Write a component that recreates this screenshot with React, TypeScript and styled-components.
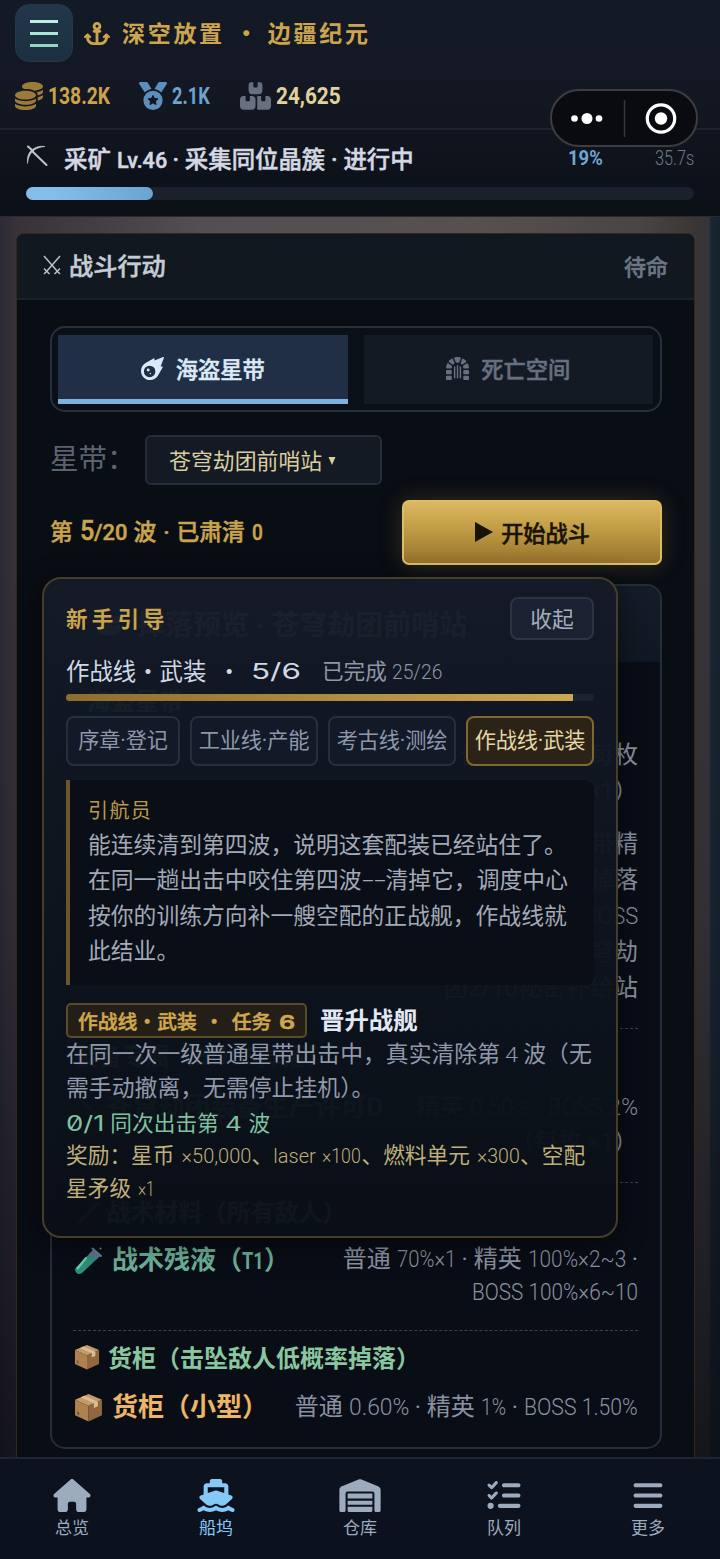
import React, { useLayoutEffect, useRef, useState } from "react";
import styled, { createGlobalStyle, css } from "styled-components";
import {
  FaAnchor, FaCoins, FaMedal, FaBoxesStacked, FaMeteor, FaDungeon,
  FaHouse, FaShip, FaWarehouse, FaListCheck, FaBars, FaBoxOpen,
} from "react-icons/fa6";

const Global = createGlobalStyle`
  * { box-sizing: border-box; }
  html, body { margin: 0; background: #0b1018; }
  body {
    font-family: Roboto, "Noto Sans CJK SC", sans-serif;
    color: #a3abb9;
    -webkit-font-smoothing: antialiased;
  }
`;

/* Regular-to-medium thickening for CJK labels */
const medium = css`
  -webkit-text-stroke: 0.5px currentColor;
`;

/* ---------- fitted latin text ---------- */
const FitBox = styled.span<{ $w: number }>`
  display: inline-block;
  width: ${(p) => p.$w}px;
  line-height: 1;
  white-space: nowrap;
`;
const FitInner = styled.span<{ $size?: number; $weight?: number; $wide?: boolean }>`
  display: inline-block;
  transform-origin: 0 50%;
  word-spacing: 0;
  font-family: Roboto, sans-serif;
  ${(p) => p.$size && css`font-size: ${p.$size}px;`}
  ${(p) => p.$weight && css`font-weight: ${p.$weight};`}
  ${(p) => p.$wide && css`
    font-family: Inter, sans-serif;
    font-weight: ${p.$weight ?? 400};
    font-feature-settings: "zero";
  `}
`;
type FitProps = { w: number; size?: number; weight?: number; wide?: boolean; children: React.ReactNode };
function Fit({ w, size, weight, wide, children }: FitProps) {
  const ref = useRef<HTMLSpanElement>(null);
  const [scale, setScale] = useState(1);
  useLayoutEffect(() => {
    if (ref.current) setScale(w / ref.current.offsetWidth);
  }, [w]);
  return (
    <FitBox $w={w}>
      <FitInner ref={ref} $size={size} $weight={weight} $wide={wide} style={{ transform: `scaleX(${scale})` }}>
        {children}
      </FitInner>
    </FitBox>
  );
}

/* ---------- page frame ---------- */
const Page = styled.div`
  position: relative;
  width: 720px;
  height: 1559px;
  overflow: hidden;
  display: flex;
  flex-direction: column;
`;

const Header = styled.header`
  height: 130px;
  flex: none;
  padding: 4px 15px 0;
  background: linear-gradient(180deg, #141a25, #131824 60%, #111620);
  border-bottom: 2px solid #1e232c;
`;
const TitleRow = styled.div`
  display: flex;
  align-items: center;
  height: 58px;
`;
const MenuButton = styled.button`
  width: 58px;
  height: 58px;
  padding: 0;
  border: 1px solid #22394a;
  border-radius: 14px;
  background: linear-gradient(180deg, #22384a, #1b2f40);
  display: flex;
  flex-direction: column;
  align-items: center;
  justify-content: center;
  gap: 9px;
`;
const MenuLine = styled.span<{ $shade: string }>`
  width: 28px;
  height: 3px;
  background: ${(p) => p.$shade};
`;
const BrandIcon = styled(FaAnchor)`
  width: 26px;
  height: 25px;
  margin: 0 12px 0 11px;
  color: #cda54c;
`;
const Brand = styled.h1`
  margin: -3px 0 0;
  font: 700 23px/34px "Noto Sans CJK SC", sans-serif;
  letter-spacing: 2.7px;
  color: #cda54c;
  display: flex;
`;
const BrandDot = styled.span`
  width: 43px;
  text-align: center;
  letter-spacing: 0;
`;
const Stats = styled.div`
  display: flex;
  align-items: center;
  height: 34px;
  margin-top: 17px;
`;
const Stat = styled.div<{ $w: number; $color: string; $icon: string; $iconW?: number }>`
  width: ${(p) => p.$w}px;
  display: flex;
  align-items: center;
  gap: 5px;
  font-weight: 700;
  font-size: 23px;
  line-height: 34px;
  color: ${(p) => p.$color};
  svg { width: ${(p) => p.$iconW ?? 28}px; height: 28px; color: ${(p) => p.$icon}; }
  > span { margin-top: 1px; }
`;

const Strip = styled.section`
  height: 87px;
  flex: none;
  padding: 12px 26px 0;
  background: linear-gradient(180deg, #10151f, #0b0f16);
  border-bottom: 1px solid #272a31;
`;
const StripRow = styled.div`
  display: flex;
  align-items: center;
  height: 36px;
`;
const StripIcon = styled.svg`
  width: 22px;
  height: 22px;
  margin: -9px 16px 0 0;
`;
const StripText = styled.div`
  flex: 1;
  font: 500 23.4px/36px Roboto, "Noto Sans CJK SC", sans-serif;
  ${medium}
  color: #d3d8e2;
  white-space: pre;
`;
const Percent = styled.span`
  width: 87px;
  margin-top: -5px;
  color: #6fa6d3;
  font-size: 20px;
`;
const Remain = styled.span`
  margin-top: -5px;
  color: #717886;
  font-size: 20px;
`;
const Track = styled.div`
  height: 13px;
  margin-top: 9px;
  border-radius: 7px;
  background: #1a202c;
`;
const TrackFill = styled.div`
  width: 127px;
  height: 13px;
  border-radius: 7px;
  background: linear-gradient(90deg, #85bde8, #84bee9 20%, #6ba3d2);
`;

const Capsule = styled.div`
  position: absolute;
  left: 550px;
  top: 89px;
  width: 148px;
  height: 58px;
  border: 2px solid #3c3d43;
  border-radius: 29px;
  background: #090b11;
  display: flex;
  align-items: center;
  justify-content: center;
`;

const Main = styled.main`
  flex: 1;
  min-height: 0;
  overflow: hidden;
  padding: 16px 25px 0 16px;
  background:
    linear-gradient(180deg, transparent 300px, rgba(8, 10, 16, 0.12) 700px, rgba(8, 10, 16, 0.72)),
    linear-gradient(90deg, #2b2a35 0, #383138 14px, #544e53 200px, #58504f 480px, #4a4444 640px, #3b3534 694px, #35353b 709px, #1b2633 711px, #172231 720px);
`;
const Card = styled.section`
  width: 679px;
  height: 1400px;
  border: 1px solid #33281f;
  border-radius: 8px;
  background: #090d14;
  overflow: hidden;
`;
const CardHead = styled.div`
  height: 66px;
  padding: 0 26px 2px;
  display: flex;
  align-items: center;
  background: #11181f;
  border-bottom: 2px solid #1b222a;
`;
const Swords = styled.svg`
  width: 18px;
  height: 20px;
  margin-right: 8px;
`;
const CardTitle = styled.h2`
  margin: 0;
  flex: 1;
  font: 500 24.2px/40px "Noto Sans CJK SC", sans-serif;
  ${medium}
  color: #c6ccd5;
`;
const CardState = styled.span`
  font: 500 22px/40px "Noto Sans CJK SC", sans-serif;
  ${medium}
  color: #6c7684;
`;
const CardBody = styled.div`
  padding: 26px 32px 0 33px;
`;

const Tabs = styled.div`
  height: 86px;
  padding: 7px 7px 7px 6px;
  border: 2px solid #27303b;
  border-radius: 15px;
  background: #0a1018;
  display: flex;
  gap: 16px;
`;
const Tab = styled.button<{ $active?: boolean }>`
  flex: 1;
  height: 69px;
  padding: 2px 0 0;
  border: 0;
  border-bottom: 5px solid ${(p) => (p.$active ? "#7db2df" : "#141a24")};
  background: ${(p) => (p.$active ? "#202f45" : "#141a24")};
  color: ${(p) => (p.$active ? "#dce9f8" : "#657080")};
  display: flex;
  align-items: center;
  justify-content: center;
  gap: 12px;
  font: 500 22.3px/34px "Noto Sans CJK SC", sans-serif;
  ${medium}
  svg { width: 23px; height: 23px; }
`;

const BeltRow = styled.div`
  display: flex;
  align-items: center;
  height: 50px;
  margin-top: 23px;
`;
const BeltLabel = styled.span`
  width: 95px;
  font: 400 28.5px/40px "Noto Sans CJK SC", sans-serif;
  color: #5b6371;
  white-space: nowrap;
  margin-top: -7px;
`;
const BeltSelect = styled.button`
  width: 237px;
  height: 50px;
  border: 2px solid #262d38;
  border-radius: 6px;
  background: #141a23;
  padding: 0 0 1px 22px;
  display: flex;
  align-items: center;
  gap: 6px;
  font: 400 21.9px/40px "Noto Sans CJK SC", sans-serif;
  color: #d9cda1;
`;
const Caret = styled.svg`
  width: 8px;
  height: 8px;
  margin-top: 3px;
`;

const WaveRow = styled.div`
  display: flex;
  align-items: center;
  justify-content: space-between;
  margin-top: 15px;
  height: 65px;
`;
const Wave = styled.div`
  font: 500 22.8px/34px Roboto, "Noto Sans CJK SC", sans-serif;
  ${medium}
  word-spacing: 1.2px;
  color: #caa44d;
  white-space: pre;
`;
const StartButton = styled.button`
  width: 260px;
  height: 65px;
  border: 2px solid #dcbc64;
  border-radius: 7px;
  background: linear-gradient(180deg, #dcb860, #b9953f 55%, #94712c);
  box-shadow: 0 0 24px rgba(200, 165, 60, 0.22);
  color: #191304;
  display: flex;
  align-items: center;
  justify-content: center;
  gap: 8px;
  font: 500 22.2px/34px "Noto Sans CJK SC", sans-serif;
  ${medium}
  padding: 0 0 2px;
  svg { width: 19px; height: 20px; }
`;

/* ---------- drop preview ---------- */
const Drops = styled.section`
  height: 865px;
  margin-top: 19px;
  border: 2px solid #262d38;
  border-radius: 15px;
  background: #090d15;
  overflow: hidden;
`;
const DropsHead = styled.div`
  height: 76px;
  padding: 4px 0 0 43px;
  display: flex;
  align-items: center;
  gap: 14px;
  background: linear-gradient(180deg, #131c28, #101823);
  color: #c8ced8;
  font: 700 28px/40px Roboto, "Noto Sans CJK SC", sans-serif;
  svg { width: 28px; height: 28px; }
`;
const DropGroup = styled.div<{ $h: number; $last?: boolean }>`
  height: ${(p) => p.$h}px;
  margin: 0 22px 0 21px;
  border-bottom: ${(p) => (p.$last ? "0" : "1px dashed #39414b")};
`;
const DropTitle = styled.div<{ $top: number; $indent?: number; $color?: string }>`
  padding: ${(p) => p.$top}px 0 0 ${(p) => p.$indent ?? 1}px;
  display: flex;
  align-items: center;
  gap: 8px;
  font: 700 24px/36px "Noto Sans CJK SC", sans-serif;
  white-space: nowrap;
  color: ${(p) => p.$color ?? "#89c7a0"};
`;
const DropRow = styled.div<{ $top: number; $lh: number; $color?: string }>`
  display: flex;
  justify-content: space-between;
  padding-top: ${(p) => p.$top}px;
  line-height: ${(p) => p.$lh}px;
  color: ${(p) => p.$color ?? "#6bae98"};
`;
const DropName = styled.div`
  display: flex;
  align-items: center;
  gap: 9px;
  height: 34px;
  padding-left: 1px;
  font: 700 26px/34px Roboto, "Noto Sans CJK SC", sans-serif;
  white-space: nowrap;
`;
const DropRates = styled.div`
  color: #8a91a1;
  font-size: 24px;
  font-weight: 400;
  text-align: right;
  white-space: nowrap;
`;

/* ---------- guide panel ---------- */
const Guide = styled.aside`
  position: absolute;
  left: 42px;
  top: 577px;
  width: 576px;
  height: 661px;
  padding: 18px 22px 0;
  border: 2px solid #463d2a;
  border-radius: 19px;
  background: linear-gradient(180deg, rgba(20, 26, 38, 0.965), rgba(12, 18, 27, 0.965) 70%, rgba(10, 15, 23, 0.965));
  box-shadow: 0 6px 26px rgba(0, 0, 0, 0.5);
`;
const GuideHead = styled.div`
  display: flex;
  align-items: center;
  justify-content: space-between;
  height: 42px;
`;
const GuideTitle = styled.h3`
  margin: 0;
  font: 700 21.5px/34px "Noto Sans CJK SC", sans-serif;
  letter-spacing: 4.2px;
  color: #caa44d;
`;
const Collapse = styled.button`
  width: 84px;
  height: 43px;
  padding: 0;
  border: 2px solid #2b3441;
  border-radius: 8px;
  background: #1a2130;
  color: #a4adbb;
  font: 400 21.8px/36px "Noto Sans CJK SC", sans-serif;
`;
const GuideStatus = styled.div`
  display: flex;
  align-items: center;
  height: 40px;
  margin-top: 11px;
  font: 400 23.4px/40px "Noto Sans CJK SC", sans-serif;
  color: #d0d8e6;
  white-space: pre;
`;
const StatusDot = styled.span`
  margin: 0 10px 0 6px;
`;
const GuideDone = styled.span`
  margin-left: 21px;
  font-size: 21.6px;
  color: #8d97a7;
`;
const GuideTrack = styled.div`
  height: 7px;
  margin-top: 4px;
  border-radius: 4px;
  overflow: hidden;
  background: #1b2430;
`;
const GuideFill = styled.div`
  width: 507px;
  height: 7px;
  background: linear-gradient(90deg, #8d6d2f, #cba752);
`;
const Chips = styled.div`
  display: flex;
  justify-content: space-between;
  margin-top: 15px;
`;
const Chip = styled.button<{ $w: number; $active?: boolean }>`
  width: ${(p) => p.$w}px;
  height: 50px;
  padding: 0;
  border: 2px solid ${(p) => (p.$active ? "#80682e" : "#262f3c")};
  border-radius: 8px;
  background: ${(p) => (p.$active ? "#2b2416" : "#131a27")};
  color: ${(p) => (p.$active ? "#e5d7a5" : "#8e98aa")};
  font: 400 21.2px/40px Roboto, "Noto Sans CJK SC", sans-serif;
  letter-spacing: -0.2px;
  white-space: nowrap;
`;
const Quote = styled.blockquote`
  margin: 14px 0 0;
  height: 205px;
  padding: 13px 0 0 18px;
  border-left: 4px solid #67572b;
  border-radius: 0 9px 9px 0;
  background: #0a0e16;
`;
const Speaker = styled.div`
  font: 400 20px/33px "Noto Sans CJK SC", sans-serif;
  letter-spacing: 1.4px;
  color: #bd9a49;
`;
const QuoteLine = styled.div`
  height: 35.4px;
  font: 400 22.8px/35.4px "Noto Sans CJK SC", sans-serif;
  color: #a2aab8;
  white-space: nowrap;
`;
const TaskHead = styled.div`
  display: flex;
  align-items: center;
  gap: 13px;
  margin-top: 18px;
  height: 35px;
`;
const TaskTag = styled.span`
  width: 241px;
  height: 35px;
  padding-left: 10px;
  border: 2px solid #5b4c28;
  border-radius: 5px;
  background: #231e17;
  color: #cfa74c;
  font: 500 19.8px/31px "Noto Sans CJK SC", sans-serif;
  ${medium}
  word-spacing: 3.2px;
  white-space: pre;
`;
const TaskTitle = styled.strong`
  margin-top: -4px;
  font: 700 24.4px/34px "Noto Sans CJK SC", sans-serif;
  color: #e2e8f3;
`;
const TaskLine = styled.div<{ $color?: string; $size?: number; $lh?: number; $top?: number; $space?: number }>`
  height: ${(p) => p.$lh ?? 34}px;
  margin-top: ${(p) => p.$top ?? 0}px;
  font: 400 ${(p) => p.$size ?? 22.85}px/${(p) => p.$lh ?? 34}px "Noto Sans CJK SC", sans-serif;
  word-spacing: ${(p) => p.$space ?? 0}px;
  color: ${(p) => p.$color ?? "#8f99aa"};
  white-space: pre;
`;

/* ---------- bottom navigation ---------- */
const Nav = styled.nav`
  height: 102px;
  flex: none;
  display: flex;
  border-top: 2px solid #1c2734;
  background: linear-gradient(180deg, #0c131f, #0b111c);
`;
const NavItem = styled.a<{ $active?: boolean }>`
  flex: 1;
  display: flex;
  flex-direction: column;
  align-items: center;
  padding-top: 20px;
  color: ${(p) => (p.$active ? "#86c8f6" : "#9cabbd")};
  svg { height: 33px; width: 42px; }
`;
const NavLabel = styled.span`
  margin-top: 4px;
  font: 400 17px/22px "Noto Sans CJK SC", sans-serif;
`;

const Crate = ({ size }: { size: number }) => (
  <svg width={size} height={size} viewBox="0 0 28 28">
    <path d="M14 1 L27 6.5 L14 12.5 L1 6.5Z" fill="#c59a68" />
    <path d="M1 6.5 L14 12.5 V27.5 L1 21.5Z" fill="#b08150" />
    <path d="M27 6.5 L14 12.5 V27.5 L27 21.5Z" fill="#93673e" />
    <path d="M6.5 4.2 L10 2.7 L23 8.4 V12.8 L19.2 14.4 V10Z" fill="#d9bd98" />
    <path d="M3 17.5l2 1v3l-2-1z" fill="#7b5631" />
  </svg>
);
const Tube = () => (
  <svg width="29" height="29" viewBox="0 0 29 29">
    <path d="M19.5 3.5 L26 10 L8 27 Q4.500 29 2.300 26.700 Q0 24.500 2 21.500Z" fill="#2f8f78" />
    <path d="M19.500 3.500 L26 10 L22 13.800 L14.500 8.800Z" fill="#58788c" />
    <path d="M12 12 L3.500 22.500" stroke="#6fd0ae" strokeWidth="2" strokeLinecap="round" />
    <path d="M18.500 2.500 L27 10" stroke="#65869f" strokeWidth="2" strokeLinecap="round" />
    <circle cx="26.500" cy="2.500" r="1" fill="#58a794" />
  </svg>
);

export default function App() {
  return (
    <Page>
      <Global />
      <Header>
        <TitleRow>
          <MenuButton>
            <MenuLine $shade="#bfeee6" />
            <MenuLine $shade="#a9e6d5" />
            <MenuLine $shade="#93d6bd" />
          </MenuButton>
          <BrandIcon />
          <Brand>深空放置<BrandDot>•</BrandDot>边疆纪元</Brand>
        </TitleRow>
        <Stats>
          <Stat $w={124} $color="#cca34a" $icon="#9a7b3a"><FaCoins /><Fit w={62}>138.2K</Fit></Stat>
          <Stat $w={101} $color="#6ea3d0" $icon="#5d8fbd"><FaMedal /><Fit w={38}>2.1K</Fit></Stat>
          <Stat $w={110} $color="#e0d29c" $icon="#66707f" $iconW={31}><FaBoxesStacked /><Fit w={65}>24,625</Fit></Stat>
        </Stats>
      </Header>

      <Strip>
        <StripRow>
          <StripIcon viewBox="0 0 22 22" fill="none" stroke="#bfc5cf" strokeLinecap="round">
            <path d="M6.500 6.500 L20.500 20" strokeWidth="2" />
            <path d="M1.500 18 C.8 11.500 3 6.500 7 4 C11 1.300 15 1 19 1.500 C14 2 10 3.200 7 6 C4 9 2.500 12 1.500 18Z" fill="#bfc5cf" strokeWidth=".7" />
            <path d="M2 1.500 L7 6" strokeWidth="2" />
          </StripIcon>
          <StripText>采矿 <Fit w={50} size={22}>Lv.46</Fit> · 采集同位晶簇 · 进行中</StripText>
          <Percent><Fit w={35} weight={700}>19%</Fit></Percent>
          <Remain><Fit w={39} weight={300}>35.7s</Fit></Remain>
        </StripRow>
        <Track><TrackFill /></Track>
      </Strip>

      <Main>
        <Card>
          <CardHead>
            <Swords viewBox="0 0 18 20" stroke="#b9c0c9" fill="none" strokeWidth="1.500">
              <path d="M1 1 L14.500 16.500 M17 1 L3.500 16.500 M1 13.500 L6.500 19 M17 13.500 L11.500 19 M3.500 16.500 L1 19 M14.500 16.500 L17 19" />
            </Swords>
            <CardTitle>战斗行动</CardTitle>
            <CardState>待命</CardState>
          </CardHead>
          <CardBody>
            <Tabs>
              <Tab $active><FaMeteor />海盗星带</Tab>
              <Tab><FaDungeon />死亡空间</Tab>
            </Tabs>
            <BeltRow>
              <BeltLabel>星带：</BeltLabel>
              <BeltSelect>
                苍穹劫团前哨站
                <Caret viewBox="0 0 8 8"><path d="M.5 0H7.500L4 8Z" fill="#d9cda1" /></Caret>
              </BeltSelect>
            </BeltRow>
            <WaveRow>
              <Wave>第 <Fit w={14} size={27}>5</Fit><Fit w={33} size={22.5}>/20</Fit> 波 · 已肃清 <Fit w={11} size={22.5}>0</Fit></Wave>
              <StartButton>
                <svg viewBox="0 0 19 20"><path d="M1 0L19 10L1 20Z" fill="#191304" /></svg>
                开始战斗
              </StartButton>
            </WaveRow>

            <Drops>
              <DropsHead><FaBoxOpen />掉落预览 · 苍穹劫团前哨站</DropsHead>
              <DropGroup $h={367}>
                <DropTitle $top={20} $indent={14}>海盗星带</DropTitle>
                <DropRow $top={19} $lh={36}>
                  <DropName>星币</DropName>
                  <DropRates>普通 100% · 每枚<br />（掉落 ×1）</DropRates>
                </DropRow>
                <DropRow $top={17} $lh={36}>
                  <DropName>密匙</DropName>
                  <DropRates>星带精<br />英掉落<br /><Fit w={54} weight={300}>BOSS</Fit><br />苍穹劫<br />团2/10秘密补给站</DropRates>
                </DropRow>
              </DropGroup>
              <DropGroup $h={154}>
                <DropTitle $top={8}>装备专属（BOSS掉落）</DropTitle>
                <DropRow $top={17} $lh={35}>
                  <DropName>＼ 苍穹劫团装备生产许可D</DropName>
                  <DropRates>精英 <Fit w={60} weight={300}>0.50%</Fit> · <Fit w={54} weight={300}>BOSS</Fit> <Fit w={30} weight={300}>2%</Fit><br />（每枚 ×1）</DropRates>
                </DropRow>
              </DropGroup>
              <DropGroup $h={148}>
                <DropTitle $top={10} $indent={4}>／ 战术材料（所有敌人）</DropTitle>
                <DropRow $top={14} $lh={33}>
                  <DropName><Tube /><span>战术残液（<Fit w={22} size={24} weight={700}>T1</Fit>）</span></DropName>
                  <DropRates>
                    普通 <Fit w={59} weight={300}>70%×1</Fit> · 精英 <Fit w={98} weight={300}>100%×2~3</Fit> ·<br />
                    <Fit w={166} weight={300}>BOSS 100%×6~10</Fit>
                  </DropRates>
                </DropRow>
              </DropGroup>
              <DropGroup $h={110} $last>
                <DropTitle $top={8}><Crate size={26} />货柜（击坠敌人低概率掉落）</DropTitle>
                <DropRow $top={15} $lh={34} $color="#edb565">
                  <DropName><Crate size={29} />货柜（小型）</DropName>
                  <DropRates>
                    普通 <Fit w={60} weight={300}>0.60%</Fit> · 精英 <Fit w={25} weight={300}>1%</Fit> · <Fit w={114} weight={300}>BOSS 1.50%</Fit>
                  </DropRates>
                </DropRow>
              </DropGroup>
            </Drops>
          </CardBody>
        </Card>
      </Main>

      <Nav>
        <NavItem><FaHouse /><NavLabel>总览</NavLabel></NavItem>
        <NavItem $active><FaShip /><NavLabel>船坞</NavLabel></NavItem>
        <NavItem><FaWarehouse /><NavLabel>仓库</NavLabel></NavItem>
        <NavItem><FaListCheck /><NavLabel>队列</NavLabel></NavItem>
        <NavItem><FaBars /><NavLabel>更多</NavLabel></NavItem>
      </Nav>

      <Guide>
        <GuideHead>
          <GuideTitle>新手引导</GuideTitle>
          <Collapse>收起</Collapse>
        </GuideHead>
        <GuideStatus>
          作战线・武装 <StatusDot>・</StatusDot><Fit w={50} size={22} wide>5/6</Fit>
          <GuideDone>已完成 <Fit w={50} size={20} weight={300}>25/26</Fit></GuideDone>
        </GuideStatus>
        <GuideTrack><GuideFill /></GuideTrack>
        <Chips>
          <Chip $w={114}>序章·登记</Chip>
          <Chip $w={128}>工业线·产能</Chip>
          <Chip $w={128}>考古线·测绘</Chip>
          <Chip $w={128} $active>作战线·武装</Chip>
        </Chips>
        <Quote>
          <Speaker>引航员</Speaker>
          <QuoteLine>能连续清到第四波，说明这套配装已经站住了。</QuoteLine>
          <QuoteLine>在同一趟出击中咬住第四波<Fit w={24} weight={300}>--</Fit>清掉它，调度中心</QuoteLine>
          <QuoteLine>按你的训练方向补一艘空配的正战舰，作战线就</QuoteLine>
          <QuoteLine>此结业。</QuoteLine>
        </Quote>
        <TaskHead>
          <TaskTag>作战线・武装 ・ 任务 <Fit w={16} size={19} weight={600} wide>6</Fit></TaskTag>
          <TaskTitle>晋升战舰</TaskTitle>
        </TaskHead>
        <TaskLine $top={-3}>在同一次一级普通星带出击中，真实清除第 <Fit w={13} size={20} weight={300}>4</Fit> 波（无</TaskLine>
        <TaskLine>需手动撤离，无需停止挂机）。</TaskLine>
        <TaskLine $color="#7fc2a2" $size={21.7} $top={2} $space={1.5}><Fit w={38} size={21} wide>0/1</Fit> 同次出击第 <Fit w={17} size={20} wide>4</Fit> 波</TaskLine>
        <TaskLine $color="#bfae79" $size={21.7} $lh={32} $top={-1} $space={2.3}>奖励：星币 <Fit w={70} size={20} weight={300}>×50,000</Fit>、<Fit w={42} size={20} weight={300}>laser</Fit> <Fit w={39} size={20} weight={300}>×100</Fit>、燃料单元 <Fit w={43} size={20} weight={300}>×300</Fit>、空配</TaskLine>
        <TaskLine $color="#bfae79" $size={21.7} $lh={33} $space={2.3}>星矛级 <Fit w={17} size={20} weight={300}>×1</Fit></TaskLine>
      </Guide>

      <Capsule>
        <svg width="144" height="54" viewBox="0 0 144 54">
          <circle cx="22.500" cy="27.500" r="3.300" fill="#fff" />
          <circle cx="35" cy="27.500" r="5.500" fill="#fff" />
          <circle cx="47" cy="27.500" r="3.300" fill="#fff" />
          <path d="M72.500 9V46" stroke="#35373d" strokeWidth="1.500" />
          <circle cx="109" cy="27.500" r="13.700" fill="none" stroke="#fff" strokeWidth="3.200" />
          <circle cx="109" cy="27.500" r="6.200" fill="#fff" />
        </svg>
      </Capsule>
    </Page>
  );
}
